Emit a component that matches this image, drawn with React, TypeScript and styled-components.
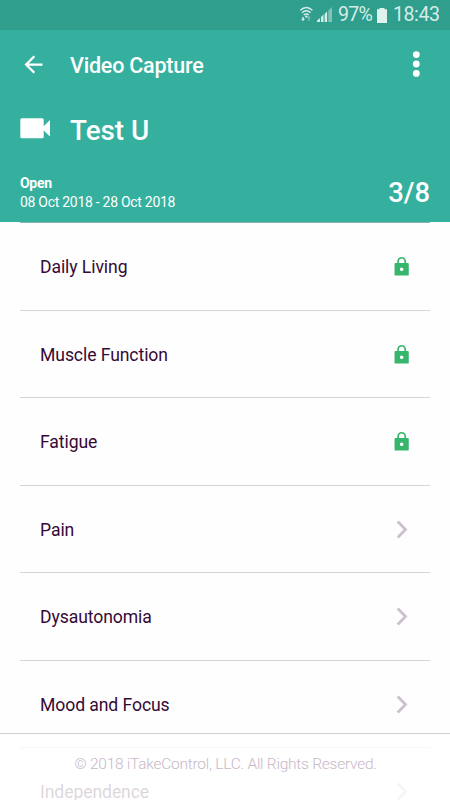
import React from 'react';
import styled, { createGlobalStyle } from 'styled-components';

const GlobalStyle = createGlobalStyle`
  * { box-sizing: border-box; }
  body { margin: 0; background: #fff; font-family: Roboto, sans-serif; overflow: hidden; }
  svg { display: block; flex: none; }
`;

const Screen = styled.div`
  position: relative;
  width: 450px;
  height: 800px;
  overflow: hidden;
  background: #fefefe;
`;

const StatusBar = styled.div`
  height: 30px;
  padding: 0 10px 0 0;
  display: flex;
  align-items: center;
  justify-content: flex-end;
  background: #309e8d;
  color: #d6ece8;
  font-size: 19.5px;
  line-height: 30px;
`;

const StatusIcons = styled.span`
  display: flex;
  align-items: flex-end;
  gap: 4px;
  padding-bottom: 2px;
`;

const Battery = styled.span`
  margin: 0 4px 0 6px;
  width: 35px;
  letter-spacing: -0.7px;
  white-space: nowrap;
`;

const Clock = styled.span`
  margin-left: 6px;
  width: 47px;
  letter-spacing: -0.4px;
  white-space: nowrap;
`;

const Header = styled.header`
  height: 192px;
  background: #35b09e;
  color: #fff;
`;

const NavBar = styled.div`
  height: 70px;
  padding: 0 30px 2px 20px;
  display: flex;
  align-items: center;
`;

const NavTitle = styled.h1`
  margin: 3px auto 0 23px;
  font-size: 21.5px;
  letter-spacing: -0.21px;
  line-height: 30px;
  font-weight: 500;
`;

const Hero = styled.div`
  height: 60px;
  padding: 0 0 3px 20px;
  display: flex;
  align-items: center;
`;

const HeroTitle = styled.h2`
  margin: 4px 0 0 20px;
  font-size: 27.8px;
  font-weight: 500;
  line-height: 36px;
`;

const Summary = styled.div`
  padding: 14px 20px 0;
  display: flex;
  justify-content: space-between;
`;

const Period = styled.div`
  font-size: 14px;
  letter-spacing: -0.28px;
  line-height: 18.5px;
`;

const Progress = styled.div`
  padding-top: 3px;
  font-size: 27.4px;
  line-height: 32px;
  font-weight: 500;
`;

const List = styled.ul`
  margin: 0;
  padding: 0 20px;
  list-style: none;
`;

const Row = styled.li`
  height: 87.5px;
  padding: 1px 14px 0 20px;
  display: flex;
  align-items: center;
  justify-content: space-between;
  border-top: 1px solid #dad2db;
  color: #350936;
  font-size: 17.6px;
  letter-spacing: -0.09px;

  &:first-child { border-top-color: #86b5b3; }
`;

const RowLabel = styled.span`
  padding-top: 2px;
  line-height: 21px;
`;

const IconSlot = styled.span`
  width: 28px;
  display: flex;
  justify-content: center;
`;

const Footer = styled.footer`
  position: absolute;
  left: 0;
  right: 0;
  bottom: 0;
  height: 67px;
  padding: 20px 0 0 1px;
  border-top: 1px solid #d2d0d3;
  background: rgba(255, 255, 255, 0.83);
  color: #c6b8c9;
  font-size: 15.5px;
  letter-spacing: -0.25px;
  font-weight: 300;
  line-height: 20px;
  text-align: center;
`;

const WifiIcon = () => (
  <svg width="14" height="16" viewBox="0 0 14 16" fill="none" stroke="#d6ece8" strokeWidth="1.4">
    <path d="M1.2 4.3Q7.5-1.4 13.4 4.3M3 6.7Q7.3 3 11.6 6.7M4.8 9Q7.3 7 9.8 9" />
    <path d="M7.3 9.2l1.5 1.3-1.5 1.4-1.5-1.4z" fill="#d6ece8" stroke="none" />
    <path d="M4.8 11v1.8h1.2L4 15.2l-2-2.4h1.4V11z" fill="#d6ece8" stroke="none" />
    <path d="M9.3 15v-2.8H7.9l2-2.4 2 2.4h-1.4V15z" fill="#82c1b6" stroke="none" />
  </svg>
);

const SignalIcon = () => (
  <svg width="15" height="15" viewBox="0 0 15 15" fill="#d6ece8">
    <path d="M0 15v-1.5L3 11v4zM4 15v-5l2.5-2.4V15zM7.6 15V7l2.5-2.4V15z" />
    <path d="M11.3 15V3.5L15 0v15z" fill="#82c1b6" />
  </svg>
);

const BatteryIcon = () => (
  <svg width="10" height="15" viewBox="0 0 10 15" fill="#e0f2ee">
    <path d="M2.5 0h5v1.3H10V15H0V1.3h2.5z" />
  </svg>
);

const BackIcon = () => (
  <svg width="27" height="27" viewBox="0 0 24 24" fill="#fff">
    <path d="M20 11H7.83l5.59-5.59L12 4l-8 8 8 8 1.41-1.41L7.83 13H20v-2z" />
  </svg>
);

const MoreIcon = () => (
  <svg width="8" height="27" viewBox="0 0 8 27" fill="#fff">
    <circle cx="4.3" cy="3.6" r="3.4" />
    <circle cx="4.3" cy="13" r="3.4" />
    <circle cx="4.3" cy="22.4" r="3.4" />
  </svg>
);

const CameraIcon = () => (
  <svg width="30" height="21" viewBox="0 0 30 21" fill="#fff">
    <path d="M1.8.3h20.4q1.5 0 1.5 1.5v6.4L30 2v16.6l-6.3-6.2v6.4q0 1.5-1.5 1.5H1.8q-1.5 0-1.5-1.5V1.8Q.3.3 1.8.3z" />
  </svg>
);

const LockIcon = () => (
  <svg width="21.3" height="21.3" viewBox="0 0 24 24" fill="#36b56c">
    <path d="M18 8h-1V6c0-2.76-2.24-5-5-5S7 3.24 7 6v2H5c-.6 0-1 .4-1 1v12c0 .6.4 1 1 1h14c.6 0 1-.4 1-1V9c0-.6-.4-1-1-1zm-6 9c-1.1 0-2-.9-2-2s.9-2 2-2 2 .9 2 2-.9 2-2 2zm3.1-9H8.9V6c0-1.71 1.39-3.1 3.1-3.1 1.71 0 3.1 1.39 3.1 3.1v2z" />
  </svg>
);

const ChevronIcon = () => (
  <svg width="12" height="19" viewBox="0 0 12 19" fill="none" stroke="#cdbfd0" strokeWidth="2.8">
    <path d="M1.7 1.5L9.5 9.5l-7.8 8" />
  </svg>
);

const sections = [
  { name: 'Daily Living', locked: true },
  { name: 'Muscle Function', locked: true },
  { name: 'Fatigue', locked: true },
  { name: 'Pain', locked: false },
  { name: 'Dysautonomia', locked: false },
  { name: 'Mood and Focus', locked: false },
  { name: 'Independence', locked: false },
];

export default function App() {
  return (
    <Screen>
      <GlobalStyle />
      <StatusBar>
        <StatusIcons>
          <WifiIcon />
          <SignalIcon />
        </StatusIcons>
        <Battery>97%</Battery>
        <BatteryIcon />
        <Clock>18:43</Clock>
      </StatusBar>
      <Header>
        <NavBar>
          <BackIcon />
          <NavTitle>Video Capture</NavTitle>
          <MoreIcon />
        </NavBar>
        <Hero>
          <CameraIcon />
          <HeroTitle>Test U</HeroTitle>
        </Hero>
        <Summary>
          <Period>
            <strong>Open</strong>
            <div>08 Oct 2018 - 28 Oct 2018</div>
          </Period>
          <Progress>3/8</Progress>
        </Summary>
      </Header>
      <List>
        {sections.map(({ name, locked }) => (
          <Row key={name}>
            <RowLabel>{name}</RowLabel>
            <IconSlot>{locked ? <LockIcon /> : <ChevronIcon />}</IconSlot>
          </Row>
        ))}
      </List>
      <Footer>© 2018 iTakeControl, LLC. All Rights Reserved.</Footer>
    </Screen>
  );
}
